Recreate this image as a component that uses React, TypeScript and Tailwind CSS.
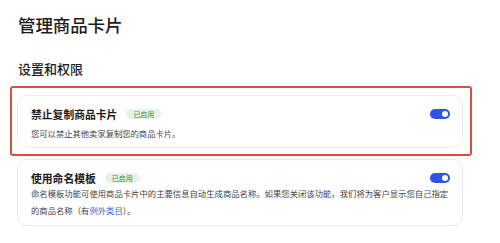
import React from "react";

const font = { fontFamily: '"Noto Sans CJK SC", "Noto Sans", sans-serif' };

function Toggle() {
  return (
    <div className="w-[20px] h-[10px] rounded-full bg-[#2a54e6] flex items-center justify-end pr-[2px] shrink-0">
      <div className="w-[6px] h-[6px] rounded-full bg-white" />
    </div>
  );
}

function Badge() {
  return (
    <div className="ml-[9px] flex items-center justify-center h-[10px] px-[7px] rounded-full bg-[#e5f3e6] text-[#3d8a4b] text-[7px] leading-none">
      已启用
    </div>
  );
}

export default function App() {
  return (
    <div className="w-[500px] h-[243px] bg-white overflow-hidden text-[#1c1c1c]" style={font}>
      <div className="pl-[18px] pt-[12px]">
        <h1 className="text-[17.5px] leading-[25px] font-medium tracking-[-0.1px]">管理商品卡片</h1>
        <h2 className="mt-[23px] text-[13px] leading-[18px] font-medium">设置和权限</h2>
      </div>
      <div className="ml-[10px] mt-[8px] w-[462px] h-[70px] border-2 border-[#d9503c] rounded-[3px] pt-[7px] pl-[5px]">
        <div className="w-[446px] h-[53px] border border-[#ebebeb] rounded-[10px] pl-[13px] pr-[12px] pt-[11px]">
          <div className="flex items-center h-[14px]">
            <span className="text-[10.8px] font-semibold leading-none">禁止复制商品卡片</span>
            <Badge />
            <div className="flex-1" />
            <Toggle />
          </div>
          <p className="mt-[6px] text-[8.3px] leading-[12px] text-[#444]">您可以禁止其他卖家复制您的商品卡片。</p>
        </div>
      </div>
      <div className="ml-[17px] mt-[3px] w-[446px] h-[67px] border border-[#ebebeb] rounded-[10px] pl-[13px] pr-[12px] pt-[11px]">
        <div className="flex items-center h-[14px]">
          <span className="text-[10.8px] font-semibold leading-none">使用命名模板</span>
          <Badge />
          <div className="flex-1" />
          <Toggle />
        </div>
        <p className="mt-0 text-[8.35px] leading-[17px] text-[#444]">
          <span>命名模板功能可使用商品卡片中的主要信息自动生成商品名称。如果您关闭该功能，我们将为客户显示您自己指定</span>
          <br />
          <span>的商品名称（有</span><span className="text-[#3a64d8]">例外类目</span><span>）。</span>
        </p>
      </div>
    </div>
  );
}
